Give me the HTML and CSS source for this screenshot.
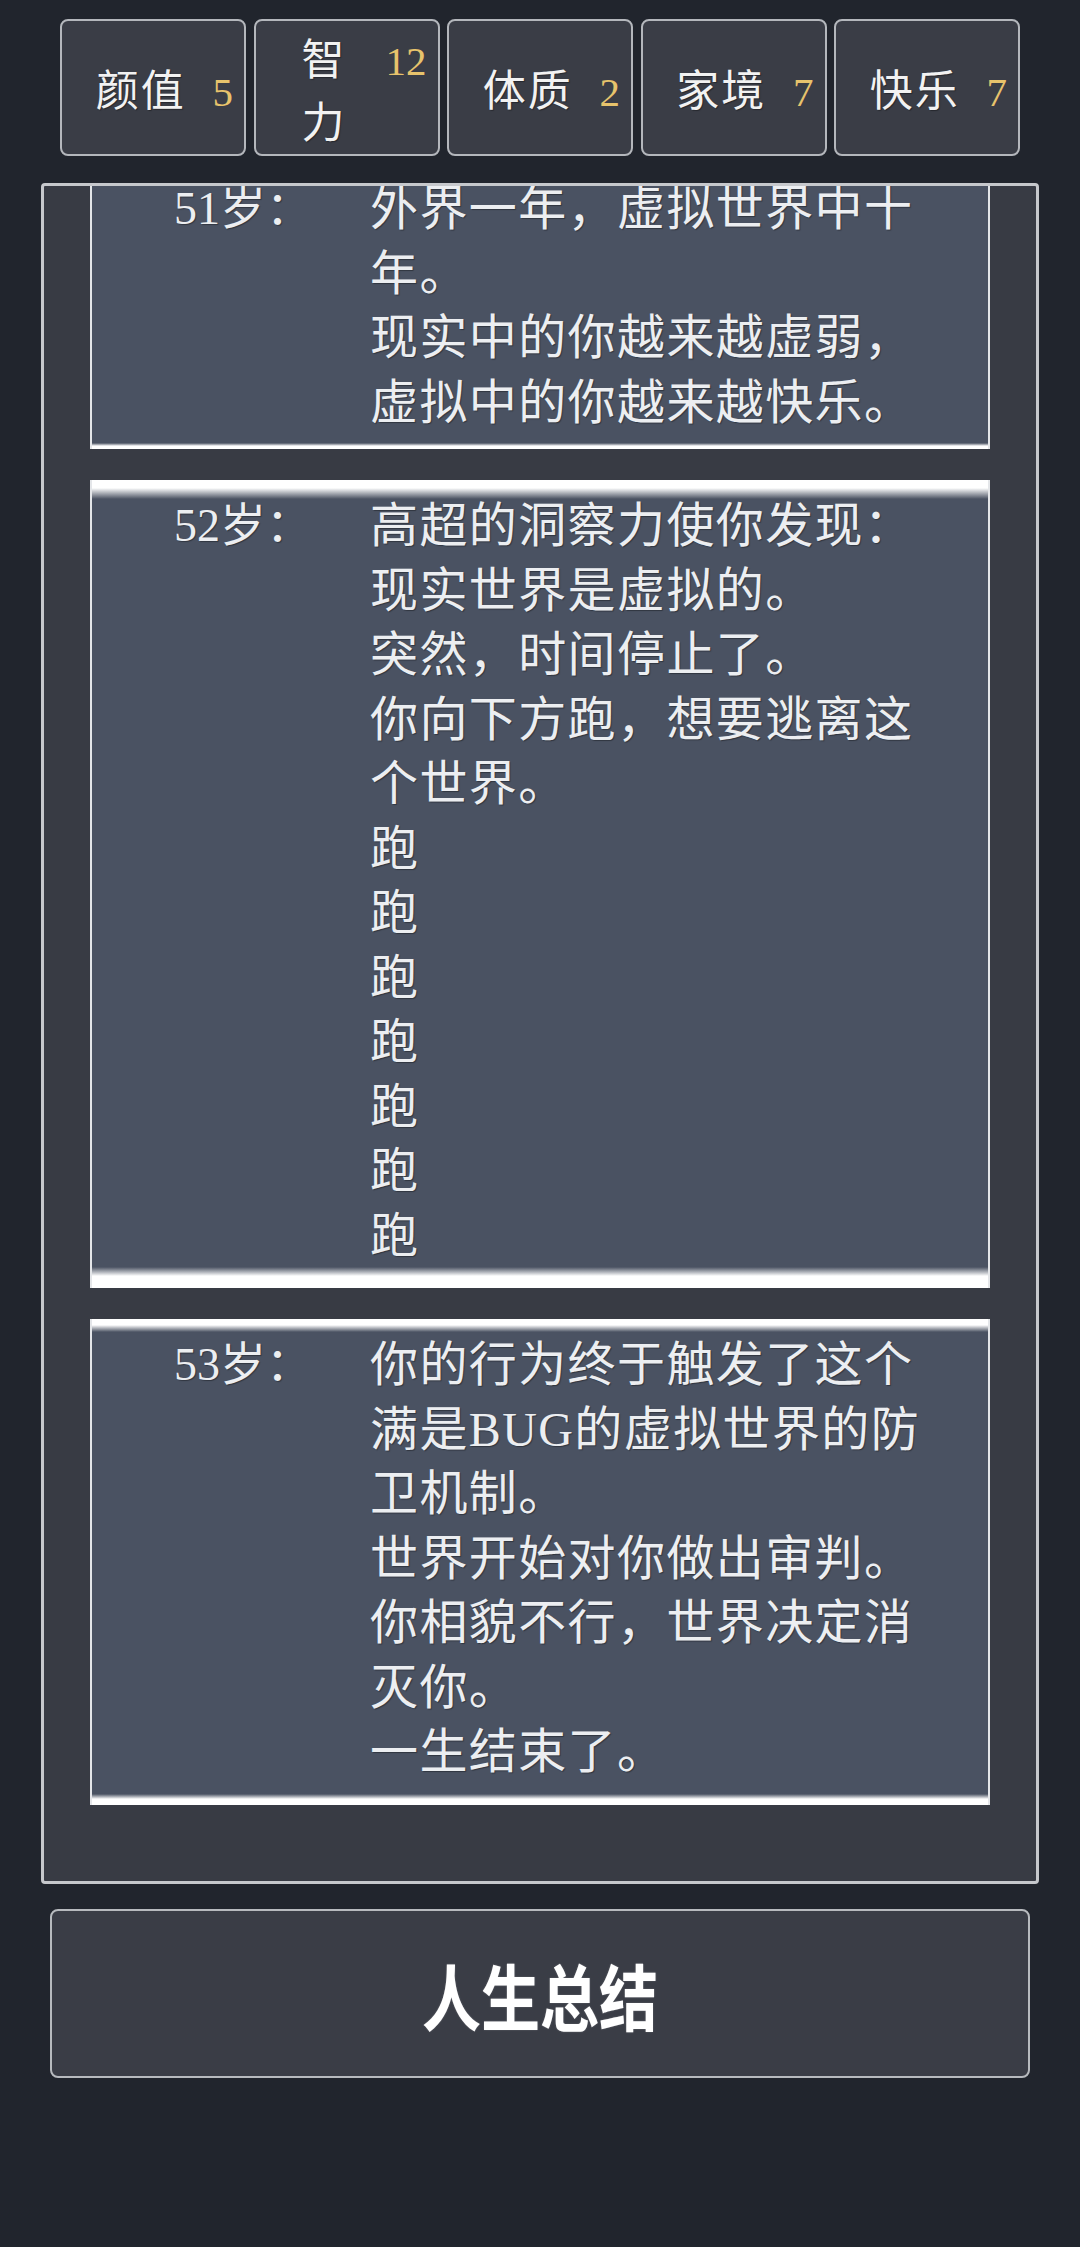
FILE: index.html
```html
<!DOCTYPE html>
<html lang="zh-CN">
<head>
<meta charset="utf-8">
<title>人生重开</title>
<link rel="stylesheet" href="styles.css">
</head>
<body>
<div class="page">
  <div class="stats">
    <div class="stat"><div class="stat-row"><span class="stat-label">颜值</span><span class="stat-value">5</span></div></div>
    <div class="stat"><div class="stat-row"><span class="stat-label">智力</span><span class="stat-value">12</span></div></div>
    <div class="stat"><div class="stat-row"><span class="stat-label">体质</span><span class="stat-value">2</span></div></div>
    <div class="stat"><div class="stat-row"><span class="stat-label">家境</span><span class="stat-value">7</span></div></div>
    <div class="stat"><div class="stat-row"><span class="stat-label">快乐</span><span class="stat-value">7</span></div></div>
  </div>

  <div class="panel">
    <div class="list">
      <div class="card card-a">
        <div class="age">51岁：</div>
        <div class="text">外界一年，虚拟世界中十<br>年。<br>现实中的你越来越虚弱，<br>虚拟中的你越来越快乐。</div>
      </div>
      <div class="card card-b">
        <div class="age">52岁：</div>
        <div class="text">高超的洞察力使你发现：<br>现实世界是虚拟的。<br>突然，时间停止了。<br>你向下方跑，想要逃离这<br>个世界。<br>跑<br>跑<br>跑<br>跑<br>跑<br>跑<br>跑</div>
      </div>
      <div class="card card-c">
        <div class="age">53岁：</div>
        <div class="text">你的行为终于触发了这个<br>满是BUG的虚拟世界的防<br>卫机制。<br>世界开始对你做出审判。<br>你相貌不行，世界决定消<br>灭你。<br>一生结束了。</div>
      </div>
    </div>
  </div>

  <button class="summary" type="button"><span class="summary-text">人生总结</span></button>
</div>
</body>
</html>
```

FILE: styles.css
```css
html, body {
  margin: 0;
  padding: 0;
}

body {
  background: #21252d;
  min-height: 2247px;
  font-family: "Liberation Serif", "Noto Sans CJK SC", serif;
  color: #eceef1;
}

.page {
  width: 1080px;
  display: flex;
  flex-direction: column;
  align-items: center;
}

/* ---------- stats row ---------- */
.stats {
  display: flex;
  gap: 7.5px;
  padding-top: 19px;
}

.stat {
  box-sizing: border-box;
  width: 186px;
  height: 137px;
  border: 2px solid #b4b7bc;
  border-radius: 8px;
  background: #3a3d46;
  display: flex;
  align-items: center;
  padding: 0 11px 0 29px;
}

.stat-row {
  display: flex;
  align-items: baseline;
  gap: 22px;
  width: 100%;
}

.stat-label {
  flex: 1 1 auto;
  min-width: 0;
  text-align: center;
  font-family: "Noto Sans CJK SC", sans-serif;
  font-size: 43px;
  letter-spacing: 2px;
  line-height: 63px;
  color: #f2f2f2;
  text-shadow: 1px 1px 1px rgba(0, 0, 0, 0.35);
}

.stat-value {
  flex: 0 0 auto;
  font-family: "Liberation Serif", serif;
  font-size: 41px;
  color: #e7c36c;
}

/* ---------- panel ---------- */
.panel {
  box-sizing: border-box;
  width: 998px;
  height: 1701px;
  margin-top: 27px;
  border: 3px solid #c6c8cc;
  border-radius: 4px;
  background: #383b44;
  overflow: hidden;
  padding: 0 46px;
}

.list {
  display: flex;
  flex-direction: column;
  gap: 31px;
  margin-top: -23px;
}

.card {
  --ts: 6px;
  --tg: 12px;
  --bs: 6px;
  --bg: 12px;
  box-sizing: border-box;
  width: 900px;
  border-left: 2px solid #e4e6e9;
  border-right: 2px solid #e4e6e9;
  background-color: #4a5262;
  background-image: linear-gradient(to bottom,
    #ffffff 0,
    #ffffff var(--ts),
    #4a5262 var(--tg),
    #4a5262 calc(100% - var(--bg)),
    #ffffff calc(100% - var(--bs)),
    #ffffff 100%);
  padding: 14px 0 20px 82px;
  display: grid;
  grid-template-columns: 196px auto;
  line-height: 64.5px;
}

.card-a { --ts: 4px; --tg: 8px; --bs: 3px; --bg: 6px; padding-bottom: 14px; }
.card-b { --ts: 8px; --tg: 19px; --bs: 12px; --bg: 21px; }
.card-c { --ts: 6px; --tg: 13px; --bs: 6px; --bg: 11px; }

.age {
  font-size: 46px;
  white-space: nowrap;
  text-shadow: 1px 1px 1px rgba(0, 0, 0, 0.35);
}

.text {
  font-size: 48px;
  letter-spacing: 1.4px;
  white-space: nowrap;
  text-shadow: 1px 1px 1px rgba(0, 0, 0, 0.35);
}

/* ---------- summary button ---------- */
.summary {
  box-sizing: border-box;
  width: 980px;
  height: 169px;
  margin-top: 25px;
  border: 2px solid #b7babe;
  border-radius: 8px;
  background: #3a3d46;
  color: #ffffff;
  font-family: "Noto Sans CJK SC", sans-serif;
  font-weight: 700;
  font-size: 72px;
  padding: 0;
  display: flex;
  align-items: center;
  justify-content: center;
}

.summary-text {
  display: inline-block;
  transform: scaleX(0.82);
  line-height: 1;
  text-shadow: 0 0 2px rgba(255, 255, 255, 0.25);
}
```
